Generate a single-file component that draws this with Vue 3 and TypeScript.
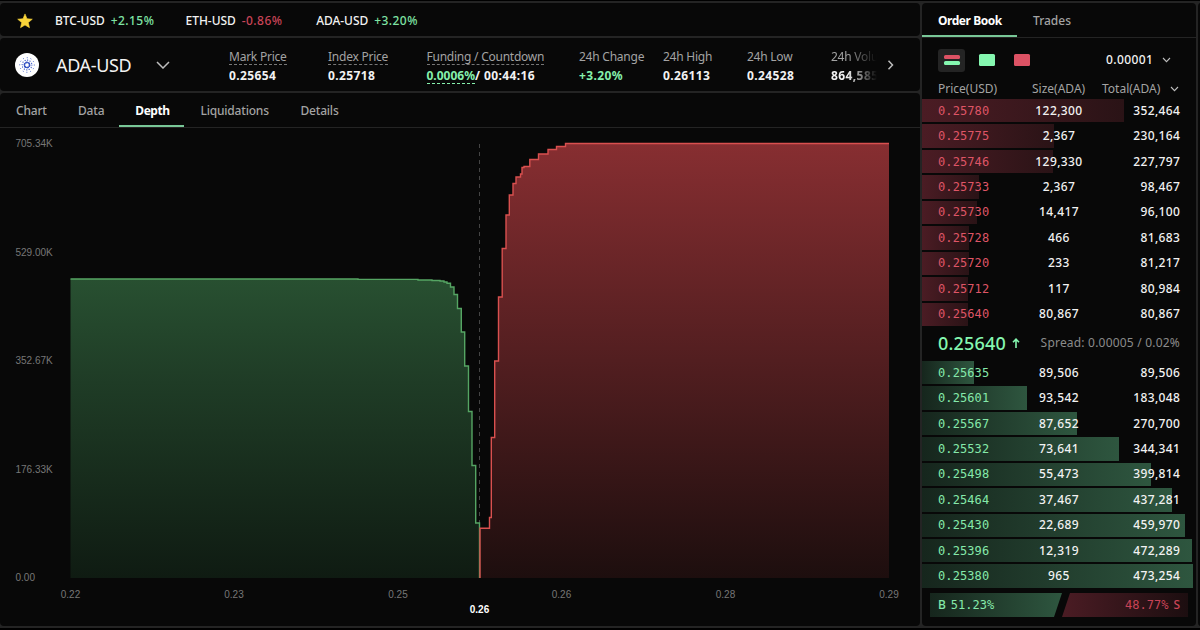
<script setup lang="ts">
interface Ticker { pair: string; change: string; up: boolean }
interface Stat { label: string; value: string; width: number; kind?: string }
interface Level { price: string; size: string; total: string; bar: number }

const tickers: Ticker[] = [
  { pair: 'BTC-USD', change: '+2.15%', up: true },
  { pair: 'ETH-USD', change: '-0.86%', up: false },
  { pair: 'ADA-USD', change: '+3.20%', up: true },
]

const stats: Stat[] = [
  { label: 'Mark Price', value: '0.25654', width: 99, kind: 'hint' },
  { label: 'Index Price', value: '0.25718', width: 98.5, kind: 'hint' },
  { label: 'Funding / Countdown', value: '0.0006%', width: 152.5, kind: 'funding' },
  { label: '24h Change', value: '+3.20%', width: 84, kind: 'up' },
  { label: '24h High', value: '0.26113', width: 84 },
  { label: '24h Low', value: '0.24528', width: 84 },
  { label: '24h Volume', value: '864,585', width: 46, kind: 'cut' },
]

const tabs: [string, number][] = [
  ['Chart', 62], ['Data', 57.3], ['Depth', 65.2], ['Liquidations', 100], ['Details', 72],
]

const rows = (list: [string, string, string, number][]): Level[] =>
  list.map(([price, size, total, bar]) => ({ price, size, total, bar }))

const asks = rows([
  ['0.25780', '122,300', '352,464', 202],
  ['0.25775', '2,367', '230,164', 132],
  ['0.25746', '129,330', '227,797', 131],
  ['0.25733', '2,367', '98,467', 57],
  ['0.25730', '14,417', '96,100', 55],
  ['0.25728', '466', '81,683', 47],
  ['0.25720', '233', '81,217', 47],
  ['0.25712', '117', '80,984', 46],
  ['0.25640', '80,867', '80,867', 46],
])

const bids = rows([
  ['0.25635', '89,506', '89,506', 52],
  ['0.25601', '93,542', '183,048', 105],
  ['0.25567', '87,652', '270,700', 155],
  ['0.25532', '73,641', '344,341', 197],
  ['0.25498', '55,473', '399,814', 229],
  ['0.25464', '37,467', '437,281', 250],
  ['0.25430', '22,689', '459,970', 263],
  ['0.25396', '12,319', '472,289', 270],
  ['0.25380', '965', '473,254', 271],
])

const yLabels: [string, number][] = [
  ['705.34K', 143.5], ['529.00K', 252], ['352.67K', 360.5], ['176.33K', 469], ['0.00', 577.5],
]
const xLabels: [string, number][] = [
  ['0.22', 70.5], ['0.23', 234], ['0.25', 398], ['0.26', 561.5], ['0.28', 725.5], ['0.29', 889],
]

const bidLine =
  'M70.5 279H358V279.4H418V280H432V280.5H440V281H444V282H447V283.3H450.5V287H454V294.5H457.5V308.5H461.3V332H464.7V366H468.5V411.5H472V465.5H475.7V523H479.5V578'
const askLine =
  'M480 578V528.3H489.5V517.5H491.3V437.5H494.7V361H498.5V297H502.2V248.5H506V215H509.3V195H513V183.5H516V177H520.5V174H522V167.5H524V166.5H529.8V159.5H538.5V154H548V149.5H556.5V146.5H565.5V143.5H889'
</script>

<template>
  <div class="page">
    <main class="left">
      <section class="panel tickers">
        <svg class="star" width="16" height="16" viewBox="0 0 16 16">
          <path d="M8 .9l2 4.8 5.3.5-4 3.4 1.2 5.1L8 12l-4.5 2.7 1.2-5.1-4-3.4L6 5.7z" fill="#f9d43a" stroke="#f9d43a" stroke-width=".6" stroke-linejoin="round" />
        </svg>
        <span v-for="t in tickers" :key="t.pair" class="ticker">
          <span>{{ t.pair }}</span><span class="pct" :class="t.up ? 'green' : 'red'">{{ t.change }}</span>
        </span>
      </section>

      <section class="panel market">
        <svg class="coin" width="24" height="24" viewBox="0 0 24 24">
          <circle cx="12" cy="12" r="12" fill="#fff" />
          <g fill="none" stroke="#3553c4" stroke-linecap="round">
            <circle cx="12" cy="12" r="2.6" stroke-width="1.7" stroke-dasharray="1.2 1.52" />
            <circle cx="12" cy="12" r="4.9" stroke-width="1.2" stroke-dasharray=".1 2.466" />
            <circle cx="12" cy="12" r="7.3" stroke-width="1" stroke-dasharray=".1 3.722" />
          </g>
        </svg>
        <span class="pair">ADA-USD</span>
        <svg class="chev" width="14" height="8" viewBox="0 0 14 8"><path d="M1 1l6 6 6-6" /></svg>
        <div class="stats">
          <div v-for="s in stats" :key="s.label" class="stat" :class="s.kind" :style="{ width: s.width + 'px' }">
            <span class="label">{{ s.label }}</span>
            <span class="value"><span class="num">{{ s.value }}</span><template v-if="s.kind === 'funding'">/ 00:44:16</template></span>
          </div>
        </div>
        <svg class="more" width="7" height="10" viewBox="0 0 7 10"><path d="M1.5 .8l4 4.2-4 4.2" /></svg>
      </section>

      <section class="panel depth">
        <nav class="tabs">
          <span v-for="[t, w] in tabs" :key="t" :class="{ active: t === 'Depth' }" :style="{ width: w + 'px' }">{{ t }}</span>
        </nav>
        <svg class="chart" width="920" height="498" viewBox="0 128 920 498">
          <defs>
            <linearGradient id="bid" x1="0" y1="143" x2="0" y2="578" gradientUnits="userSpaceOnUse">
              <stop offset=".31" stop-color="#285031" /><stop offset=".55" stop-color="#1f3c26" /><stop offset="1" stop-color="#0f1b12" />
            </linearGradient>
            <linearGradient id="ask" x1="0" y1="143" x2="0" y2="578" gradientUnits="userSpaceOnUse">
              <stop offset="0" stop-color="#872e31" /><stop offset=".5" stop-color="#521e20" /><stop offset="1" stop-color="#1d0e0e" />
            </linearGradient>
          </defs>
          <path :d="bidLine + 'H70.5Z'" fill="url(#bid)" />
          <path :d="askLine + 'V578H480Z'" fill="url(#ask)" />
          <path d="M479.5 144V578" stroke="#444" stroke-dasharray="4 4" />
          <path :d="bidLine" class="line" stroke="#55a563" />
          <path :d="askLine" class="line" stroke="#d9504f" />
          <text v-for="[t, y] in yLabels" :key="t" x="15.5" :y="y + 3.5">{{ t }}</text>
          <text v-for="[t, x] in xLabels" :key="t" :x="x" y="598" text-anchor="middle">{{ t }}</text>
          <text class="mid" x="479.5" y="612.5" text-anchor="middle">0.26</text>
        </svg>
      </section>
    </main>

    <aside class="panel book">
      <nav class="book-tabs"><span class="active">Order Book</span><span>Trades</span></nav>
      <div class="tools">
        <span class="mode"><i class="bar sell" /><i class="bar buy" /></span>
        <span class="swatch buy" />
        <span class="swatch sell" />
        <span class="tick">0.00001</span>
        <svg class="small-chev" width="9" height="6" viewBox="0 0 9 6"><path d="M1 1l3.5 3.6L8 1" /></svg>
      </div>
      <div class="head">
        <span>Price(USD)</span><span class="center">Size(ADA)</span><span class="end">Total(ADA)</span>
        <svg class="small-chev" width="9" height="6" viewBox="0 0 9 6"><path d="M1 1l3.5 3.6L8 1" /></svg>
      </div>
      <div class="levels ask">
        <div v-for="l in asks" :key="l.price" class="level">
          <div class="fill" :style="{ width: l.bar + 'px' }" />
          <span class="price">{{ l.price }}</span><span class="size">{{ l.size }}</span><span class="total">{{ l.total }}</span>
        </div>
      </div>
      <div class="last">
        <span class="last-price">0.25640</span>
        <svg width="8" height="10" viewBox="0 0 8 10"><path d="M4 10V1.5M1 4.3L4 1.2l3 3.1" /></svg>
        <span class="spread">Spread: 0.00005 / 0.02%</span>
      </div>
      <div class="levels bid">
        <div v-for="l in bids" :key="l.price" class="level">
          <div class="fill" :style="{ width: l.bar + 'px' }" />
          <span class="price">{{ l.price }}</span><span class="size">{{ l.size }}</span><span class="total">{{ l.total }}</span>
        </div>
      </div>
      <div class="ratio">
        <div class="buyers"><b>B</b><span>51.23%</span></div>
        <div class="sellers"><span>48.77%</span><b>S</b></div>
      </div>
    </aside>
  </div>
</template>

<style>
html, body { margin: 0; background: #242424; overflow: hidden; }
</style>

<style scoped>
.page {
  box-sizing: border-box; width: 1200px; height: 630px; padding-top: 3px;
  display: grid; grid-template-columns: 920px 274px 2px; column-gap: 2px;
  background: linear-gradient(#000 1px, #242424 1px, #242424 628px, #000 628px);
  color: #f2f2f2; font: 500 12px/16px "Noto Sans", "Open Sans", sans-serif; white-space: nowrap;
}
.page::after { content: ""; grid-column: 3; background: #080808; height: 623px; width: 4px; border-radius: 3px 0 0 3px; }
.panel { background: #080808; border-radius: 4px; overflow: hidden; box-sizing: border-box; }
.left { display: flex; flex-direction: column; gap: 2px; height: 623px; }
.green { color: #7fe3a4; }
.red { color: #c94457; }

.tickers { height: 33px; display: flex; align-items: center; padding: 2px 0 0 17px; }
.star { margin-right: 22px; }
.ticker { display: flex; gap: 6px; width: 130.6px; letter-spacing: -.05px; }
.pct { letter-spacing: .45px; }

.market { height: 53px; display: flex; align-items: center; padding-left: 15px; }
.coin { margin-right: 17px; }
.pair { width: 100px; padding-top: 1px; font-size: 18px; font-weight: 400; letter-spacing: -.35px; }
.chev path, .more path, .small-chev path { fill: none; stroke: #bdbdbd; stroke-width: 1.5; }
.chev { margin-right: 59px; }
.stats { display: flex; width: 648px; margin-right: 1px; padding-top: 3px; overflow: hidden; flex: none; }
.stat { flex: none; display: flex; flex-direction: column; align-items: flex-start; }
.label { font-weight: 400; color: #a3a3a3; line-height: 15px; letter-spacing: -.24px; border-bottom: 1px solid transparent; }
.value { font-weight: 700; line-height: 16px; margin-top: 3px; letter-spacing: .4px; }
.num { border-bottom: 1px dashed transparent; display: inline-block; line-height: 15px; }
.hint .label, .funding .label { border-bottom: 1px dashed #777; }
.up .value, .funding .num { color: #85f0ac; }
.funding .num { border-bottom-color: #85f0ac; letter-spacing: 0; }
.cut { overflow: hidden; mask-image: linear-gradient(90deg, #000 35%, transparent); }
.more { margin-left: 9px; }

.depth { height: 533px; }
.tabs { height: 34px; display: flex; border-bottom: 1px solid #242424; color: #a3a3a3; letter-spacing: -.2px; }
.tabs span { box-sizing: border-box; height: 34px; line-height: 35px; padding-left: 16px; }
.tabs .active, .book-tabs .active { color: #fff; font-weight: 700; border-bottom: 2px solid #78c797; letter-spacing: -.45px; }
.chart { display: block; font: 10px "Liberation Sans", Arial, sans-serif; }
.chart text { fill: #777; }
.chart .mid { fill: #fff; font-weight: 700; }
.line { fill: none; stroke-width: 1.4; }

.book { height: 623px; }
.book-tabs { display: flex; height: 34px; border-bottom: 1px solid #242424; color: #a3a3a3; }
.book-tabs span { box-sizing: border-box; width: 95px; height: 34px; line-height: 35px; padding-left: 16px; }
.tools { height: 44px; display: flex; align-items: center; padding-left: 16px; }
.mode { width: 27px; height: 23px; margin-right: 14px; border-radius: 3px; background: #242424; display: flex; flex-direction: column; justify-content: center; align-items: center; gap: 2px; }
.bar { width: 16px; height: 4px; border-radius: 1.5px; }
.swatch { width: 16px; height: 12px; border-radius: 1.5px; margin-right: 19px; }
.buy { background: #85f7b0; }
.sell { background: #dc5264; }
.tick { margin-left: 57px; width: 56px; letter-spacing: .4px; }
.head { display: flex; align-items: center; height: 16px; margin: -1px 0 2px; padding-left: 16px; font-weight: 400; color: #a3a3a3; }
.head span { width: 94px; }
.head .center { width: 70px; }
.head .end { width: 68px; }
.small-chev path { stroke-width: 1.1; }
.levels { display: flex; flex-direction: column; gap: 2px; }
.level { position: relative; height: 23.45px; display: grid; grid-template-columns: 83px 76px 83.4px; padding-left: 16px; align-items: center; }
.level span { position: relative; }
.fill { position: absolute; left: 0; top: 0; bottom: 0; }
.ask .fill { background: linear-gradient(90deg, #4b1c24, #2a1316); }
.bid .fill { background: linear-gradient(90deg, #16261d, #2e563f); }
.price { font: 400 12px/16px "DejaVu Sans Mono", monospace; letter-spacing: .1px; }
.ask .price { color: #df5566; }
.bid .price { color: #85e9aa; }
.size, .total { letter-spacing: .4px; }
.size { text-align: center; }
.total { text-align: right; }
.last { height: 35px; display: flex; align-items: center; padding: 0 16px; }
.last-price { font-size: 18px; color: #85f7b0; width: 74px; letter-spacing: .2px; }
.last path { fill: none; stroke: #85f7b0; stroke-width: 1.6; }
.spread { margin-left: auto; font-weight: 400; color: #8b8b8b; letter-spacing: .2px; }
.ratio { display: flex; height: 24px; margin: 5px 5px 0 8px; font: 12px/24px "DejaVu Sans Mono", monospace; }
.ratio > div { box-sizing: border-box; display: flex; padding: 0 8px; gap: 5px; }
.ratio b { font: 500 12px/24px "Noto Sans", sans-serif; }
.buyers { width: 132px; color: #85e9aa; background: linear-gradient(90deg, #16261d, #2e563f); clip-path: polygon(0 0, 100% 0, calc(100% - 8px) 100%, 0 100%); }
.sellers { width: 126px; color: #c94457; justify-content: flex-end; background: linear-gradient(90deg, #4b1c24, #1c0e10); clip-path: polygon(8px 0, 100% 0, 100% 100%, 0 100%); }
</style>
